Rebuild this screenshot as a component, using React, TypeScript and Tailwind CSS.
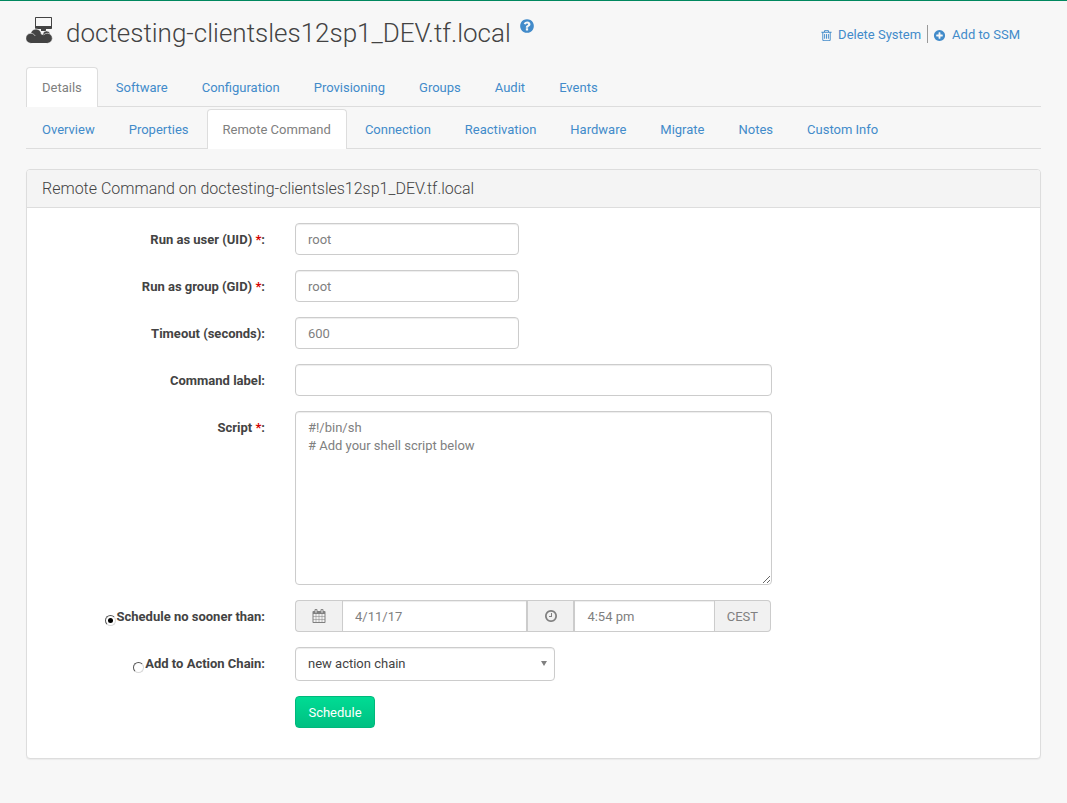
import type { InputHTMLAttributes, ReactNode } from "react";

const DISC =
  "M1664 896q0 209-103 385.5t-279.5 279.5-385.5 103-385.5-103-279.5-279.5-103-385.5 103-385.5 279.5-279.5 385.5-103 385.5 103 279.5 279.5 103 385.5z";

const ICONS = {
  plus:
    "M1344 960v-128q0-26-19-45t-45-19h-256v-256q0-26-19-45t-45-19h-128q-26 0-45 19t-19 45v256h-256q-26 0-45 19t-19 45v128q0 26 19 45t45 19h256v256q0 26 19 45t45 19h128q26 0 45-19t19-45v-256h256q26 0 45-19t19-45z" +
    DISC,
  question:
    "M1024 1376v-192q0-14-9-23t-23-9h-192q-14 0-23 9t-9 23v192q0 14 9 23t23 9h192q14 0 23-9t9-23zm256-672q0-88-55.5-163t-138.5-116-170-41q-243 0-371 213-15 24 8 42l132 100q7 6 19 6 16 0 25-12 53-68 86-92 34-24 86-24 48 0 85.5 26t37.5 59q0 38-20 61t-68 45q-63 28-115.5 86.5t-52.5 125.5v36q0 14 9 23t23 9h192q14 0 23-9t9-23q0-19 21.5-49.5t54.5-49.5q32-18 49-28.5t46-35 44.5-48 28-60.5 12.5-81z" +
    DISC,
  clock:
    "M1024 544v448q0 14-9 23t-23 9h-320q-14 0-23-9t-9-23v-64q0-14 9-23t23-9h224v-352q0-14 9-23t23-9h64q14 0 23 9t9 23zm416 352q0-148-73-273t-198-198-273-73-273 73-198 198-73 273 73 273 198 198 273 73 273-73 198-198 73-273z" +
    DISC,
  trash:
    "M704 736v576q0 14-9 23t-23 9h-64q-14 0-23-9t-9-23v-576q0-14 9-23t23-9h64q14 0 23 9t9 23zm256 0v576q0 14-9 23t-23 9h-64q-14 0-23-9t-9-23v-576q0-14 9-23t23-9h64q14 0 23 9t9 23zm256 0v576q0 14-9 23t-23 9h-64q-14 0-23-9t-9-23v-576q0-14 9-23t23-9h64q14 0 23 9t9 23zm128 724v-948h-896v948q0 22 7 40.5t14.5 27 10.5 8.5h832q3 0 10.5-8.5t14.5-27 7-40.5zm-672-1076h448l-48-117q-7-9-17-11h-317q-10 2-17 11zm928 32v64q0 14-9 23t-23 9h-96v948q0 83-47 143.5t-113 60.5h-832q-66 0-113-58.5t-47-141.5v-952h-96q-14 0-23-9t-9-23v-64q0-14 9-23t23-9h309l70-167q15-37 54-63t79-26h320q40 0 79 26t54 63l70 167h309q14 0 23 9t9 23z",
  calendar:
    "M192 1664h288v-288h-288v288zm352 0h320v-288h-320v288zm-352-352h288v-320h-288v320zm352 0h320v-320h-320v320zm-352-384h288v-288h-288v288zm736 736h320v-288h-320v288zm-384-736h320v-288h-320v288zm768 736h288v-288h-288v288zm-384-352h320v-320h-320v320zm-352-864v-288q0-13-9.5-22.5t-22.5-9.5h-64q-13 0-22.5 9.5t-9.5 22.5v288q0 13 9.5 22.5t22.5 9.5h64q13 0 22.5-9.5t9.5-22.5zm736 864h288v-320h-288v320zm-384-384h320v-288h-320v288zm384 0h288v-288h-288v288zm32-480v-288q0-13-9.5-22.5t-22.5-9.5h-64q-13 0-22.5 9.5t-9.5 22.5v288q0 13 9.5 22.5t22.5 9.5h64q13 0 22.5-9.5t9.5-22.5zm384-64v1280q0 52-38 90t-90 38h-1408q-52 0-90-38t-38-90v-1280q0-52 38-90t90-38h128v-96q0-66 47-113t113-47h64q66 0 113 47t47 113v96h384v-96q0-66 47-113t113-47h64q66 0 113 47t47 113v96h128q52 0 90 38t38 90z",
};

function Icon({ name, className }: { name: keyof typeof ICONS; className: string }) {
  return (
    <svg viewBox="0 0 1792 1792" className={className} fill="currentColor" fillRule="evenodd" aria-hidden="true">
      <path d={ICONS[name]} />
    </svg>
  );
}

function CloudSystemIcon() {
  return (
    <svg viewBox="0 0 28 28" className="h-7 w-7 shrink-0 text-[#434343]" fill="currentColor" aria-hidden="true">
      <path
        fillRule="evenodd"
        d="M9.800 1h15.400q.8 0 .8.8v10.400q0 .8-.8.8H9.800Q9 13 9 12.200V1.800Q9 1 9.800 1zM10 2v8h15V2z"
      />
      <path d="M15 13h5v2h-5z" />
      <g stroke="#f7f7f7" strokeWidth=".6">
        <circle cx="20.500" cy="18.500" r="3.600" />
        <circle cx="21.300" cy="22.300" r="5" />
        <circle cx="10" cy="18.300" r="5.300" />
        <circle cx="4.800" cy="22.300" r="5" />
      </g>
      <path d="M4.800 20h16.500v7H4.800z" />
      <path d="M20 20l-6-2-5 4 4 4z" />
    </svg>
  );
}

function Tabs({ label, items, active }: { label: string; items: string[]; active: string }) {
  return (
    <nav aria-label={label} className="flex gap-0.5 border-b border-[#dddddd]">
      {items.map((item) => (
        <a
          key={item}
          href="#"
          aria-current={item === active ? "page" : undefined}
          className={
            item === active
              ? "-mb-px rounded-t border border-b-0 border-[#dddddd] bg-white px-[15px] pt-[11px] pb-2.5 text-[#808080]"
              : "border border-b-0 border-transparent px-[15px] pt-[11px] pb-[9px] text-[#428bca]"
          }
        >
          {item}
        </a>
      ))}
    </nav>
  );
}

const FIELD =
  "block h-8 w-full border border-[#cccccc] bg-white px-3 text-[#808080] shadow-[inset_0_1px_1px_rgba(0,0,0,0.075)] outline-none";

function Field(props: InputHTMLAttributes<HTMLInputElement>) {
  return <input type="text" className={FIELD + " rounded"} {...props} />;
}

function Row({ label, children }: { label?: ReactNode; children: ReactNode }) {
  return (
    <div className="grid grid-cols-[238px_minmax(0,1fr)] gap-x-[30px]">
      <div className="pt-2 text-right font-bold">{label}</div>
      <div>{children}</div>
    </div>
  );
}

function Required() {
  return <span className="text-[#d40000]">*</span>;
}

function ChoiceLabel({ id, text, checked }: { id: string; text: string; checked?: boolean }) {
  return (
    <span className="inline-flex items-center gap-px">
      <input
        id={id}
        type="radio"
        name="schedule-type"
        defaultChecked={checked}
        className="mt-1.5 grid size-[11px] appearance-none place-content-center rounded-full border border-[#d8d8d8] border-t-[#555555] border-l-[#555555] bg-white before:size-[5px] before:rounded-full checked:before:bg-black"
      />
      <label htmlFor={id}>{text}</label>
    </span>
  );
}

export default function App() {
  return (
    <div className="min-h-screen border-t border-[#00885f] bg-[#f7f7f7] px-[26px] pb-8 font-[Roboto,sans-serif] text-[13px] leading-[18px] text-[#434343]">
      <header className="flex items-start justify-between pt-[15px] pb-4">
        <h1 className="flex items-start text-[26px] leading-[35px] font-light">
          <CloudSystemIcon />
          <span className="ml-3">doctesting-clientsles12sp1_DEV.tf.local</span>
          <a href="#" aria-label="Help" className="ml-2 text-[#428bca]">
            <Icon name="question" className="mt-0.5 size-4" />
          </a>
        </h1>
        <div className="mt-[9px] mr-[21px] flex items-center text-[#428bca]">
          <a href="#" className="flex h-[18px] items-center gap-[5px] border-r border-[#999999] pt-0.5 pr-1.5">
            <Icon name="trash" className="size-[13px]" />
            Delete System
          </a>
          <a href="#" className="flex h-[18px] items-center gap-1.5 pt-0.5 pl-[5px]">
            <Icon name="plus" className="size-[13px]" />
            Add to SSM
          </a>
        </div>
      </header>

      <div className="flex flex-col gap-0.5">
        <Tabs
          label="System"
          active="Details"
          items={["Details", "Software", "Configuration", "Provisioning", "Groups", "Audit", "Events"]}
        />
        <Tabs
          label="Details"
          active="Remote Command"
          items={[
            "Overview",
            "Properties",
            "Remote Command",
            "Connection",
            "Reactivation",
            "Hardware",
            "Migrate",
            "Notes",
            "Custom Info",
          ]}
        />
      </div>

      <main className="mt-5 overflow-hidden rounded border border-[#dddddd] bg-white shadow-[0_1px_1px_rgba(0,0,0,0.05)]">
        <h2 className="border-b border-[#dddddd] bg-[#f4f4f4] px-[15px] py-2.5 text-base leading-[17px] font-light">
          Remote Command on doctesting-clientsles12sp1_DEV.tf.local
        </h2>
        <form className="flex flex-col gap-[15px] pt-[15px] pb-[30px]" onSubmit={(e) => e.preventDefault()}>
          <Row label={<label htmlFor="uid">Run as user (UID) <Required />:</label>}>
            <div className="max-w-56"><Field id="uid" defaultValue="root" /></div>
          </Row>
          <Row label={<label htmlFor="gid">Run as group (GID) <Required />:</label>}>
            <div className="max-w-56"><Field id="gid" defaultValue="root" /></div>
          </Row>
          <Row label={<label htmlFor="timeout">Timeout (seconds):</label>}>
            <div className="max-w-56"><Field id="timeout" defaultValue="600" /></div>
          </Row>
          <Row label={<label htmlFor="command">Command label:</label>}>
            <div className="max-w-[477px]"><Field id="command" /></div>
          </Row>
          <Row label={<label htmlFor="script">Script <Required />:</label>}>
            <textarea
              id="script"
              defaultValue={"#!/bin/sh\n# Add your shell script below"}
              className="block h-[174px] w-full max-w-[477px] resize rounded border border-[#cccccc] bg-white px-3 py-[7px] text-[#808080] shadow-[inset_0_1px_1px_rgba(0,0,0,0.075)] outline-none"
            />
          </Row>
          <Row label={<ChoiceLabel id="sooner" text="Schedule no sooner than:" checked />}>
            <div className="flex h-8 max-w-[476px] text-[#808080]">
              <span className="flex w-[47px] shrink-0 items-center justify-center rounded-l border border-r-0 border-[#cccccc] bg-[#f1f1f1]">
                <Icon name="calendar" className="size-[14px]" />
              </span>
              <div className="min-w-0 flex-[185]">
                <input aria-label="Date" type="text" defaultValue="4/11/17" className={FIELD} />
              </div>
              <span className="flex w-[47px] shrink-0 items-center justify-center border border-[#cccccc] bg-[#f1f1f1]">
                <Icon name="clock" className="size-[14px]" />
              </span>
              <div className="min-w-0 flex-[140]">
                <input aria-label="Time" type="text" defaultValue="4:54 pm" className={FIELD} />
              </div>
              <span className="flex shrink-0 items-center rounded-r border border-l-0 border-[#cccccc] bg-[#f1f1f1] px-3 pt-px">
                CEST
              </span>
            </div>
          </Row>
          <Row label={<ChoiceLabel id="chain" text="Add to Action Chain:" />}>
            <div className="relative max-w-[260px]">
              <select
                aria-label="Action chain"
                className="block h-[34px] w-full appearance-none rounded border border-[#cccccc] bg-white px-3 text-[#434343] shadow-[inset_0_1px_1px_rgba(0,0,0,0.075)] outline-none"
              >
                <option>new action chain</option>
              </select>
              <svg
                viewBox="0 0 6 5"
                className="pointer-events-none absolute top-3.5 right-2 h-[5px] w-1.5 text-[#808080]"
                fill="currentColor"
                aria-hidden="true"
              >
                <path d="M0 0h6L3 5z" />
              </svg>
            </div>
          </Row>
          <Row>
            <button
              type="submit"
              className="h-8 w-20 rounded border border-[#00b87b] bg-linear-to-b from-[#00dc94] to-[#00c082] pt-px text-white"
            >
              Schedule
            </button>
          </Row>
        </form>
      </main>
    </div>
  );
}
